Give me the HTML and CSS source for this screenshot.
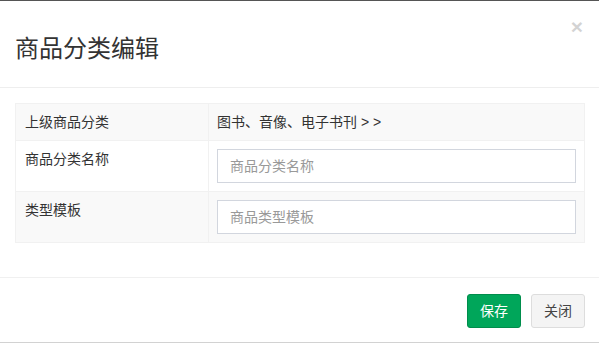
FILE: index.html
```html
<!DOCTYPE html>
<html lang="zh-CN">
<head>
<meta charset="utf-8">
<title>商品分类编辑</title>
<link rel="stylesheet" href="styles.css">
</head>
<body>
<div class="modal">
  <div class="modal-header">
    <h3 class="modal-title">商品分类编辑</h3>
    <button class="close" type="button">×</button>
  </div>
  <div class="modal-body">
    <table class="grid">
      <tr class="row-alt">
        <td class="label-cell">上级商品分类</td>
        <td class="value-cell">图书、音像、电子书刊 <span class="arrows">&gt; &gt;</span></td>
      </tr>
      <tr>
        <td class="label-cell">商品分类名称</td>
        <td class="value-cell"><input class="form-control" type="text" placeholder="商品分类名称"></td>
      </tr>
      <tr class="row-alt">
        <td class="label-cell">类型模板</td>
        <td class="value-cell"><input class="form-control" type="text" placeholder="商品类型模板"></td>
      </tr>
    </table>
  </div>
  <div class="modal-footer">
    <button class="btn btn-success" type="button">保存</button>
    <button class="btn btn-default" type="button">关闭</button>
  </div>
</div>
</body>
</html>
```

FILE: styles.css
```css
* { box-sizing: border-box; }
html, body {
  margin: 0;
  padding: 0;
  background: #fff;
}
body {
  font-family: "Liberation Sans", "Noto Sans CJK SC", sans-serif;
  font-size: 14px;
  line-height: 20px;
  color: #333;
}
.modal {
  width: 599px;
  height: 343px;
  border-top: 1px solid #555;
  border-bottom: 1px solid #d2d2d2;
  display: flex;
  flex-direction: column;
}
.modal-header {
  position: relative;
  height: 87px;
  padding: 32px 15px 0;
  border-bottom: 1px solid #eeeeee;
}
.modal-title {
  margin: 0;
  font-size: 24px;
  font-weight: 400;
  line-height: 32px;
  color: #333;
}
.close {
  position: absolute;
  top: 15px;
  right: 16px;
  padding: 0;
  border: 0;
  background: transparent;
  font-family: "Liberation Sans", sans-serif;
  font-size: 21px;
  font-weight: 700;
  line-height: 21px;
  color: #000;
  opacity: 0.17;
}
.modal-body {
  padding: 15px 14px 0 15px;
  height: 190px;
  border-bottom: 1px solid #f0f0f0;
}
.grid {
  width: 570px;
  border-collapse: collapse;
}
.grid td {
  border: 1px solid #f1f1f1;
  padding: 8px;
  vertical-align: top;
}
.row-alt td { background: #f9f9f9; }
.label-cell {
  width: 193px;
  padding-left: 9px !important;
}
.grid tr:first-child td { padding-top: 8px; padding-bottom: 8px; }
.value-cell { color: #333; }
.arrows { letter-spacing: 0; }
.form-control {
  display: block;
  width: 100%;
  height: 34px;
  padding: 6px 12px;
  font-family: "Liberation Sans", "Noto Sans CJK SC", sans-serif;
  font-size: 14px;
  color: #555;
  background: #fff;
  border: 1px solid #d2d6de;
  border-radius: 0;
  outline: none;
}
.form-control::placeholder { color: #999; }
.modal-footer {
  display: flex;
  justify-content: flex-end;
  gap: 10px;
  padding: 16px 14px 0 15px;
}
.btn {
  height: 34px;
  padding: 6px 12px;
  font-family: "Liberation Sans", "Noto Sans CJK SC", sans-serif;
  font-size: 14px;
  line-height: 20px;
  border-radius: 3px;
  border: 1px solid transparent;
}
.btn-success {
  width: 54px;
  background: #00a65a;
  border-color: #008d4c;
  color: #fff;
}
.btn-default {
  width: 54px;
  background: #f4f4f4;
  border-color: #ddd;
  color: #444;
}
```
